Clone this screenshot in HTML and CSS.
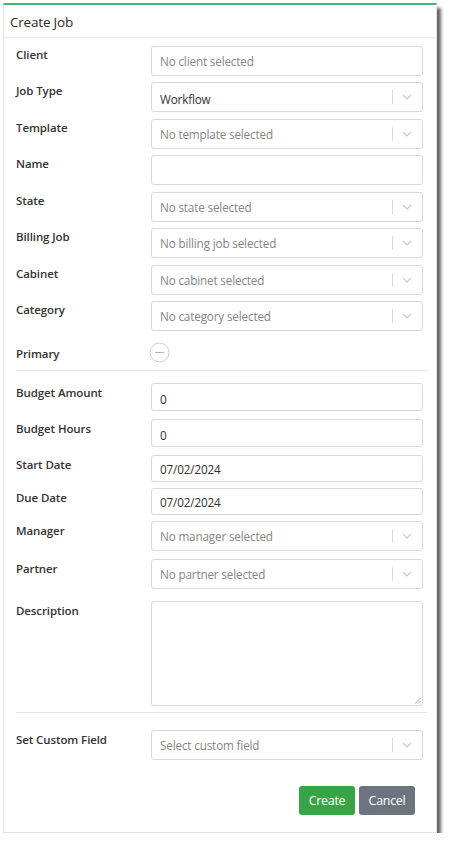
FILE: index.html
```html
<!DOCTYPE html>
<html lang="en">
<head>
<meta charset="utf-8">
<title>Create Job</title>
<link rel="stylesheet" href="styles.css">
</head>
<body>
<div class="modal">
  <div class="modal-header">Create Job</div>
  <div class="modal-body">
    <div class="group">
      <div class="row"><label class="lbl">Client</label><div class="ctl input placeholder">No client selected</div></div>
      <div class="row"><label class="lbl">Job Type</label><div class="ctl select"><span class="val value low">Workflow</span><span class="ind"><span class="sep"></span><svg class="chev" width="10" height="6" viewBox="0 0 10 6"><path d="M1 1 L5 5 L9 1" fill="none" stroke="#c8c8c8" stroke-width="1.2"/></svg></span></div></div>
      <div class="row"><label class="lbl">Template</label><div class="ctl select"><span class="val placeholder">No template selected</span><span class="ind"><span class="sep"></span><svg class="chev" width="10" height="6" viewBox="0 0 10 6"><path d="M1 1 L5 5 L9 1" fill="none" stroke="#c8c8c8" stroke-width="1.2"/></svg></span></div></div>
      <div class="row"><label class="lbl">Name</label><div class="ctl input"></div></div>
      <div class="row"><label class="lbl">State</label><div class="ctl select"><span class="val placeholder">No state selected</span><span class="ind"><span class="sep"></span><svg class="chev" width="10" height="6" viewBox="0 0 10 6"><path d="M1 1 L5 5 L9 1" fill="none" stroke="#c8c8c8" stroke-width="1.2"/></svg></span></div></div>
      <div class="row"><label class="lbl">Billing Job</label><div class="ctl select"><span class="val placeholder">No billing job selected</span><span class="ind"><span class="sep"></span><svg class="chev" width="10" height="6" viewBox="0 0 10 6"><path d="M1 1 L5 5 L9 1" fill="none" stroke="#c8c8c8" stroke-width="1.2"/></svg></span></div></div>
      <div class="row"><label class="lbl">Cabinet</label><div class="ctl select"><span class="val placeholder">No cabinet selected</span><span class="ind"><span class="sep"></span><svg class="chev" width="10" height="6" viewBox="0 0 10 6"><path d="M1 1 L5 5 L9 1" fill="none" stroke="#c8c8c8" stroke-width="1.2"/></svg></span></div></div>
      <div class="row"><label class="lbl">Category</label><div class="ctl select"><span class="val placeholder">No category selected</span><span class="ind"><span class="sep"></span><svg class="chev" width="10" height="6" viewBox="0 0 10 6"><path d="M1 1 L5 5 L9 1" fill="none" stroke="#c8c8c8" stroke-width="1.2"/></svg></span></div></div>
      <div class="row row-primary"><label class="lbl">Primary</label><div class="toggle"><svg width="21" height="21" viewBox="0 0 21 21"><circle cx="10.5" cy="10.5" r="9.5" fill="#fff" stroke="#cfcfcf" stroke-width="1"/><path d="M6 10.5 H15" stroke="#b5b5b5" stroke-width="1"/></svg></div></div>
    </div>
    <hr class="divider">
    <div class="group group-2">
      <div class="row r-budget"><label class="lbl">Budget Amount</label><div class="ctl input value h28 low">0</div></div>
      <div class="row r-budget"><label class="lbl">Budget Hours</label><div class="ctl input value h28 low">0</div></div>
      <div class="row r-date"><label class="lbl">Start Date</label><div class="ctl input value h27">07/02/2024</div></div>
      <div class="row r-date2"><label class="lbl">Due Date</label><div class="ctl input value h27">07/02/2024</div></div>
      <div class="row"><label class="lbl">Manager</label><div class="ctl select"><span class="val placeholder">No manager selected</span><span class="ind"><span class="sep"></span><svg class="chev" width="10" height="6" viewBox="0 0 10 6"><path d="M1 1 L5 5 L9 1" fill="none" stroke="#c8c8c8" stroke-width="1.2"/></svg></span></div></div>
      <div class="row r-partner"><label class="lbl">Partner</label><div class="ctl select"><span class="val placeholder">No partner selected</span><span class="ind"><span class="sep"></span><svg class="chev" width="10" height="6" viewBox="0 0 10 6"><path d="M1 1 L5 5 L9 1" fill="none" stroke="#c8c8c8" stroke-width="1.2"/></svg></span></div></div>
      <div class="row r-desc"><label class="lbl">Description</label><div class="ctl textarea"><svg class="grip" width="7" height="7" viewBox="0 0 7 7"><path d="M6.5 1 L1 6.5 M6.5 4 L4 6.5" stroke="#999" stroke-width="0.8"/></svg></div></div>
    </div>
    <hr class="divider divider-2">
    <div class="group group-3">
      <div class="row"><label class="lbl">Set Custom Field</label><div class="ctl select"><span class="val placeholder">Select custom field</span><span class="ind"><span class="sep"></span><svg class="chev" width="10" height="6" viewBox="0 0 10 6"><path d="M1 1 L5 5 L9 1" fill="none" stroke="#c8c8c8" stroke-width="1.2"/></svg></span></div></div>
    </div>
    <div class="actions">
      <button class="btn btn-create">Create</button>
      <button class="btn btn-cancel">Cancel</button>
    </div>
  </div>
</div>
</body>
</html>
```

FILE: styles.css
```css
* { box-sizing: border-box; }
html, body { margin: 0; padding: 0; background: #fff; }
body {
  font-family: "Open Sans", "Noto Sans", "Liberation Sans", sans-serif;
  color: #333;
}
.modal {
  margin: 3px 0 0 3px;
  width: 434px;
  height: 830px;
  background: #fff;
  border: 1px solid #e3e3e3;
  border-top: 2px solid #3dba74;
  box-shadow: 4px 5px 3px rgba(0,0,0,0.6);
}
.modal-header {
  height: 33px;
  padding: 8px 0 0 6px;
  font-size: 13.5px;
  line-height: 18px;
  color: #2b2b2b;
  border-bottom: 1px solid #ececec;
  letter-spacing: -0.2px;
}
.modal-body {
  padding: 8px 9px 0 12px;
}
.group { padding-right: 4px; }
.row {
  display: grid;
  grid-template-columns: 135px 272px;
  margin-bottom: 6.45px;
}
.lbl {
  font-size: 11.5px;
  font-weight: 600;
  line-height: 16px;
  padding-top: 1px;
  color: #333;
  letter-spacing: -0.1px;
}
.ctl {
  height: 30px;
  border: 1px solid #d9d9d9;
  border-radius: 3px;
  background: #fff;
  font-size: 11.7px;
  letter-spacing: -0.15px;
}
.input {
  display: flex;
  align-items: center;
  padding-left: 8px;
}
.placeholder { color: #858585; }
.value { color: #333; }
.low { padding-top: 3px; }
.h28 { height: 28px; }
.h27 { height: 27px; }
.select {
  display: flex;
  align-items: center;
  justify-content: space-between;
}
.val { padding-left: 8px; }
.ind {
  display: flex;
  align-items: center;
  height: 100%;
  width: 30px;
}
.sep {
  width: 1px;
  height: 14px;
  background: #d9d9d9;
}
.chev { margin-left: 9px; }
.row-primary { margin-top: 11px; margin-bottom: 0; height: 21px; align-items: center; }
.row-primary .lbl { padding-top: 3px; }
.toggle { height: 21px; margin-left: -2px; }
.divider {
  border: 0;
  border-top: 1px solid #e6e6e6;
  margin: 7px 0 12px 0;
}
.group-2 .row { margin-bottom: 8px; }
.group-2 .lbl { padding-top: 2px; }
.r-date, .r-date2 { margin-bottom: 6px !important; }
.r-partner { margin-bottom: 12px !important; }
.textarea {
  height: 105px;
  position: relative;
}
.grip { position: absolute; right: 1px; bottom: 1px; }
.r-desc { margin-bottom: 6px !important; }
.divider-2 { margin: 0 0 17px 0; }
.group-3 .row { margin-bottom: 0; }
.group-3 .lbl { padding-top: 2px; }
.actions {
  display: flex;
  justify-content: flex-end;
  gap: 4px;
  margin-top: 26px;
  padding-right: 12px;
}
.btn {
  height: 29px;
  width: 56px;
  border: 0;
  border-radius: 3px;
  color: #fff;
  font-family: "Open Sans", "Noto Sans", sans-serif;
  font-size: 12.5px;
  letter-spacing: -0.3px;
  padding: 0;
}
.btn-create { background: #38a446; }
.btn-cancel { background: #6c757d; }
```
